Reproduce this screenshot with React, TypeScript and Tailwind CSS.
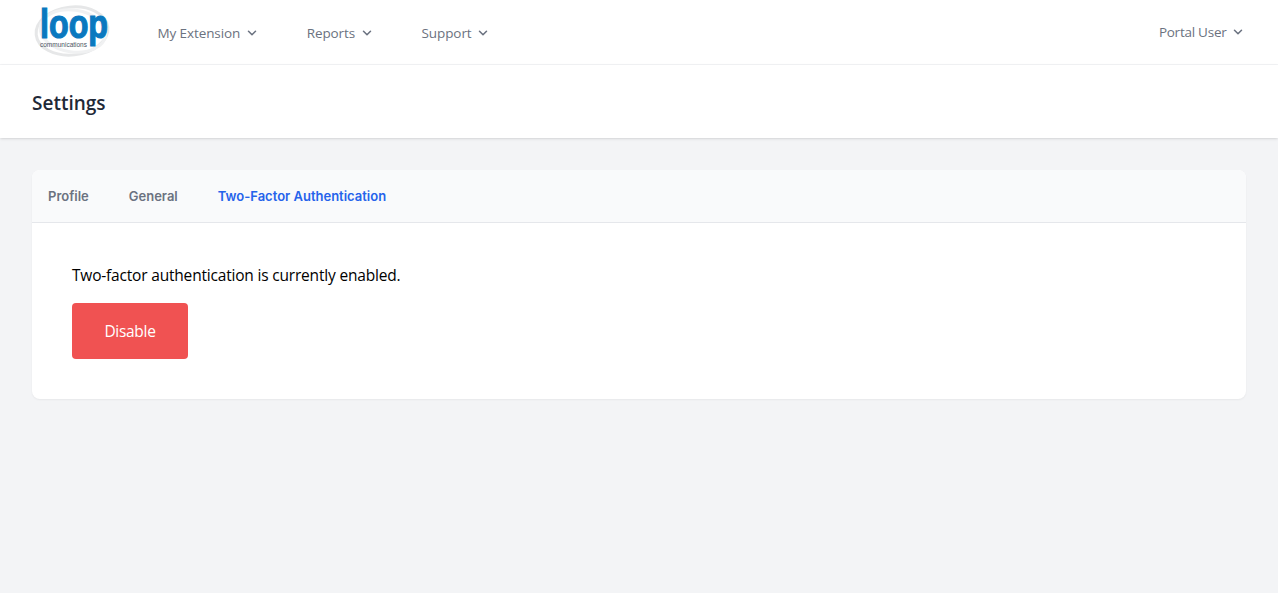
import { ChevronDown } from 'lucide-react'

const navItems = ['My Extension', 'Reports', 'Support']
const tabs = ['Profile', 'General', 'Two-Factor Authentication']

function Logo() {
  return (
    <svg width="84" height="56" viewBox="0 0 84 56" className="block overflow-visible">
      <ellipse cx="39" cy="27" rx="36" ry="24" fill="none" stroke="#e6e7e8" strokeWidth="3" transform="rotate(-6 39 27)" />
      <ellipse cx="40" cy="27" rx="33" ry="21" fill="none" stroke="#f0f1f2" strokeWidth="3" transform="rotate(8 40 27)" />
      <text
        x="7"
        y="34"
        fontFamily="'Liberation Sans', sans-serif"
        fontSize="40"
        fontWeight="700"
        fill="#0a78bf"
        stroke="#0a78bf"
        strokeWidth="1.2"
        textLength="68"
        lengthAdjust="spacingAndGlyphs"
      >
        loop
      </text>
      <text
        x="7"
        y="43"
        fontFamily="'Liberation Sans', sans-serif"
        fontSize="8"
        fill="#4b5563"
        textLength="47"
        lengthAdjust="spacingAndGlyphs"
      >
        communications
      </text>
    </svg>
  )
}

export default function App() {
  return (
    <div className="flex min-h-[593px] flex-col bg-[#f3f4f6] font-['Open_Sans',sans-serif]">
      <nav className="flex h-[65px] items-center justify-between border-b border-gray-100 bg-white pr-[33px] pl-[33px]">
        <div className="flex items-center">
          <Logo />
          <div className="ml-[40.5px] flex items-center gap-[48px] pt-[2px]">
            {navItems.map((item) => (
              <button key={item} className="flex items-center gap-[4.5px] text-[13.5px] tracking-[-0.1px] text-[#6b7280]">
                {item}
                <ChevronDown size={14} strokeWidth={2.6} />
              </button>
            ))}
          </div>
        </div>
        <button className="flex items-center gap-[4.5px] text-[13.5px] tracking-[-0.25px] text-[#6b7280]">
          Portal User
          <ChevronDown size={14} strokeWidth={2.6} />
        </button>
      </nav>

      <header className="flex h-[73px] items-center bg-white px-8 pt-[3px] shadow">
        <h1 className="text-[19px] font-semibold text-[#1f2937]">Settings</h1>
      </header>

      <main className="px-8 pt-8">
        <div className="overflow-hidden rounded-lg bg-white shadow-[0_1px_2px_0_rgba(0,0,0,0.05)]">
          <div className="flex h-[53px] items-center gap-[40px] border-b border-gray-200 bg-[#f9fafb] px-4 pt-[2px] font-['Inter',sans-serif] text-[13px] font-semibold text-[#6b7280]">
            {tabs.map((tab) => (
              <span key={tab} className={tab === tabs[2] ? 'text-[#2563eb]' : ''}>
                {tab}
              </span>
            ))}
          </div>
          <div className="p-10">
            <p className="text-[15.5px] leading-6 tracking-[-0.19px] text-black">Two-factor authentication is currently enabled.</p>
            <button className="mt-4 h-14 w-[116px] rounded bg-[#f05252] pt-[1px] text-[15.5px] tracking-[-0.3px] text-white">Disable</button>
          </div>
        </div>
      </main>
    </div>
  )
}
